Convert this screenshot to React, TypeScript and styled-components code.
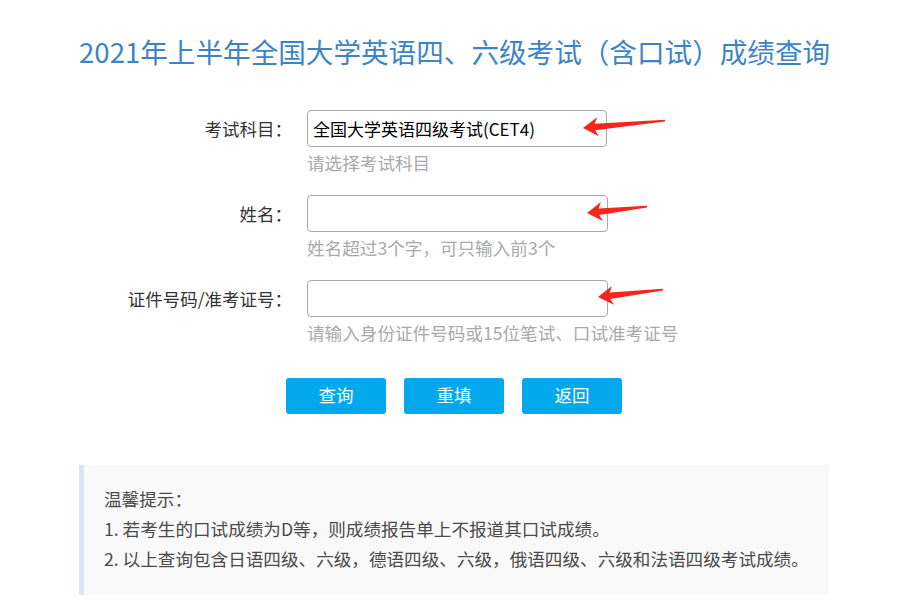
import React from 'react'
import styled, { createGlobalStyle } from 'styled-components'

const GlobalStyle = createGlobalStyle`
  html, body {
    margin: 0;
    padding: 0;
    background: #fff;
  }
  body {
    font-family: "Noto Sans CJK SC", "Noto Sans", sans-serif;
    color: #333;
  }
`

const Page = styled.div`
  width: 750px;
  margin-left: calc(50% - 378px);
  padding-top: 31px;
  padding-bottom: 20px;
`

const Title = styled.h1`
  margin: 0;
  font-size: 27.6px;
  line-height: 40px;
  font-weight: 400;
  color: #3d84c6;
  text-align: center;
  white-space: nowrap;
`

const Form = styled.form`
  margin-top: 39px;
  display: flex;
  flex-direction: column;
  gap: 20px;
`

const Row = styled.div`
  display: grid;
  grid-template-columns: 213px 1fr;
  column-gap: 15px;
  align-items: start;
`

const Label = styled.label`
  font-size: 17.5px;
  line-height: 37px;
  color: #333;
  text-align: right;
  white-space: nowrap;
`

const Field = styled.div`
  position: relative;
`

const Input = styled.div<{ $width?: number }>`
  box-sizing: border-box;
  width: ${({ $width }) => $width ?? 300}px;
  height: 37px;
  border: 1px solid #a8a8a8;
  border-radius: 4px;
  padding: 0 5px;
  font-size: 17px;
  line-height: 35px;
  color: #000;
  background: #fff;
  white-space: nowrap;
`

const Hint = styled.div`
  margin-top: 4px;
  font-size: 17.6px;
  line-height: 24px;
  color: #a9a9a9;
  white-space: nowrap;
`

const ArrowSvg = styled.svg`
  position: absolute;
  left: 0;
  top: 0;
  width: 400px;
  height: 40px;
  overflow: visible;
  pointer-events: none;
`

const Buttons = styled.div`
  margin-top: 33px;
  display: flex;
  justify-content: center;
  gap: 18px;
`

const Button = styled.button`
  width: 100px;
  height: 36px;
  padding: 0 0 4px;
  border: none;
  border-radius: 3px;
  background: #03a9ec;
  color: #fff;
  font-family: inherit;
  font-size: 17.5px;
  cursor: pointer;
`

const Tips = styled.div`
  margin-top: 51px;
  background: #f9f9f9;
  border-left: 5px solid #dbe5f1;
  padding: 19px 20px 21px 20px;
  font-size: 17.6px;
  line-height: 30px;
  color: #4a4a4a;
`

const TipLine = styled.p`
  margin: 0;
  white-space: nowrap;
`

type Pt = [number, number]

// red annotation arrow, tip pointing at the field
function Arrow({ tip, tail }: { tip: Pt; tail: Pt }) {
  const dx = tail[0] - tip[0]
  const dy = tail[1] - tip[1]
  const len = Math.hypot(dx, dy)
  const ux = dx / len
  const uy = dy / len
  const vx = -uy
  const vy = ux
  const local: Pt[] = [
    [0, 0],
    [15, -9.5],
    [12, -3.2],
    [len, -1.2],
    [len, 0.4],
    [12, 3.2],
    [15, 9.5]
  ]
  const points = local
    .map(([a, b]) => `${tip[0] + a * ux + b * vx},${tip[1] + a * uy + b * vy}`)
    .join(' ')
  return (
    <ArrowSvg>
      <polygon points={points} fill="#f5261b" />
    </ArrowSvg>
  )
}

export default function App() {
  return (
    <>
      <GlobalStyle />
      <Page>
        <Title>2021年上半年全国大学英语四、六级考试（含口试）成绩查询</Title>
        <Form onSubmit={(e) => e.preventDefault()}>
          <Row>
            <Label>考试科目：</Label>
            <Field>
              <Input>全国大学英语四级考试(CET4)</Input>
              <Arrow tip={[276, 18]} tail={[358, 11]} />
              <Hint>请选择考试科目</Hint>
            </Field>
          </Row>
          <Row>
            <Label>姓名：</Label>
            <Field>
              <Input $width={301} />
              <Arrow tip={[280, 18]} tail={[340, 12]} />
              <Hint>姓名超过3个字，可只输入前3个</Hint>
            </Field>
          </Row>
          <Row>
            <Label>证件号码/准考证号：</Label>
            <Field>
              <Input $width={301} />
              <Arrow tip={[291, 17]} tail={[356, 10]} />
              <Hint>请输入身份证件号码或15位笔试、口试准考证号</Hint>
            </Field>
          </Row>
        </Form>
        <Buttons>
          <Button type="button">查询</Button>
          <Button type="button">重填</Button>
          <Button type="button">返回</Button>
        </Buttons>
        <Tips>
          <TipLine>温馨提示：</TipLine>
          <TipLine>1. 若考生的口试成绩为D等，则成绩报告单上不报道其口试成绩。</TipLine>
          <TipLine>2. 以上查询包含日语四级、六级，德语四级、六级，俄语四级、六级和法语四级考试成绩。</TipLine>
        </Tips>
      </Page>
    </>
  )
}
